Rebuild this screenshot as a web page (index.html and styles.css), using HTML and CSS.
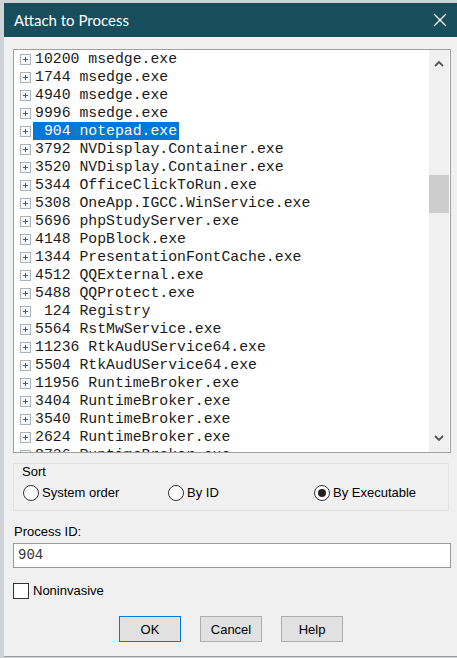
FILE: index.html
```html
<!DOCTYPE html>
<html>
<head>
<meta charset="utf-8">
<link rel="stylesheet" href="styles.css">
</head>
<body>
<div class="dialog">
  <div class="titlebar">
    <span class="title">Attach to Process</span>
    <svg class="close" width="14" height="14" viewBox="0 0 14 14"><path d="M1 1L13 13M13 1L1 13" stroke="#fff" stroke-width="1.2" fill="none"/></svg>
  </div>
  <div class="content">
    <div class="listbox">
      <div class="rows">
        <div class="row"><span class="pl"></span><span class="tx">10200 msedge.exe</span></div>
        <div class="row"><span class="pl"></span><span class="tx">1744 msedge.exe</span></div>
        <div class="row"><span class="pl"></span><span class="tx">4940 msedge.exe</span></div>
        <div class="row"><span class="pl"></span><span class="tx">9996 msedge.exe</span></div>
        <div class="row"><span class="pl"></span><span class="tx sel">&nbsp;904 notepad.exe</span></div>
        <div class="row"><span class="pl"></span><span class="tx">3792 NVDisplay.Container.exe</span></div>
        <div class="row"><span class="pl"></span><span class="tx">3520 NVDisplay.Container.exe</span></div>
        <div class="row"><span class="pl"></span><span class="tx">5344 OfficeClickToRun.exe</span></div>
        <div class="row"><span class="pl"></span><span class="tx">5308 OneApp.IGCC.WinService.exe</span></div>
        <div class="row"><span class="pl"></span><span class="tx">5696 phpStudyServer.exe</span></div>
        <div class="row"><span class="pl"></span><span class="tx">4148 PopBlock.exe</span></div>
        <div class="row"><span class="pl"></span><span class="tx">1344 PresentationFontCache.exe</span></div>
        <div class="row"><span class="pl"></span><span class="tx">4512 QQExternal.exe</span></div>
        <div class="row"><span class="pl"></span><span class="tx">5488 QQProtect.exe</span></div>
        <div class="row"><span class="pl"></span><span class="tx">&nbsp;124 Registry</span></div>
        <div class="row"><span class="pl"></span><span class="tx">5564 RstMwService.exe</span></div>
        <div class="row"><span class="pl"></span><span class="tx">11236 RtkAudUService64.exe</span></div>
        <div class="row"><span class="pl"></span><span class="tx">5504 RtkAudUService64.exe</span></div>
        <div class="row"><span class="pl"></span><span class="tx">11956 RuntimeBroker.exe</span></div>
        <div class="row"><span class="pl"></span><span class="tx">3404 RuntimeBroker.exe</span></div>
        <div class="row"><span class="pl"></span><span class="tx">3540 RuntimeBroker.exe</span></div>
        <div class="row"><span class="pl"></span><span class="tx">2624 RuntimeBroker.exe</span></div>
        <div class="row"><span class="pl"></span><span class="tx">8736 RuntimeBroker.exe</span></div>
      </div>
      <div class="scrollbar">
        <svg class="arrow" width="10" height="6" viewBox="0 0 10 6"><path d="M1 5L5 1L9 5" stroke="#555" stroke-width="1.8" fill="none"/></svg>
        <div class="track"><div class="thumb"></div></div>
        <svg class="arrow" width="10" height="6" viewBox="0 0 10 6"><path d="M1 1L5 5L9 1" stroke="#555" stroke-width="1.8" fill="none"/></svg>
      </div>
    </div>

    <div class="group">
      <div class="legend">Sort</div>
      <div class="radios">
        <label class="radio r1"><span class="circle"></span>System order</label>
        <label class="radio r2"><span class="circle"></span>By ID</label>
        <label class="radio r3"><span class="circle on"></span>By Executable</label>
      </div>
    </div>

    <div class="pid-label">Process ID:</div>
    <div class="input">904</div>

    <label class="check"><span class="box"></span>Noninvasive</label>

    <div class="buttons">
      <div class="btn default">OK</div>
      <div class="btn">Cancel</div>
      <div class="btn">Help</div>
    </div>
  </div>
</div>
</body>
</html>
```

FILE: styles.css
```css
html, body {
  margin: 0;
  padding: 0;
}
body {
  background: #cfd3d6;
  width: 457px;
  height: 658px;
  overflow: hidden;
  font-family: "Liberation Sans", Arial, sans-serif;
}
.dialog {
  margin-left: 4px;
  margin-top: 3px;
  width: 453px;
  height: 653px;
  background: #f0f0f0;
  border-bottom: 1px solid #9a9a9a;
  display: flex;
  flex-direction: column;
}
.titlebar {
  height: 34px;
  background: #184e5c;
  display: flex;
  align-items: center;
  justify-content: space-between;
  padding: 0 10px 0 10px;
  flex-shrink: 0;
}
.title {
  color: #ffffff;
  font-family: Lato, "Open Sans", sans-serif;
  font-size: 15px;
  margin-top: -1px;
}
.content {
  padding: 12px 2px 0 9px;
  display: flex;
  flex-direction: column;
}
.listbox {
  width: 436px;
  height: 402px;
  border: 1px solid #a0a0a0;
  background: #ffffff;
  display: flex;
  overflow: hidden;
}
.rows {
  flex: 1;
  overflow: hidden;
}
.row {
  height: 18px;
  display: flex;
  align-items: center;
  font-family: "Liberation Mono", "Courier New", monospace;
  font-size: 14.8px;
  color: #1a1a1a;
  white-space: pre;
}
.pl {
  width: 11px;
  height: 11px;
  border: 1px solid #a9b2bd;
  box-sizing: border-box;
  margin-left: 6px;
  margin-right: 2px;
  position: relative;
  background: #f7f8fa;
}
.pl::before {
  content: "";
  position: absolute;
  left: 2px;
  top: 4px;
  width: 5px;
  height: 1px;
  background: #4a5a70;
}
.pl::after {
  content: "";
  position: absolute;
  left: 4px;
  top: 2px;
  width: 1px;
  height: 5px;
  background: #4a5a70;
}
.tx {
  padding: 0 2px;
  line-height: 18px;
}
.tx.sel {
  background: #0078d7;
  color: #ffffff;
}
.scrollbar {
  width: 20px;
  background: #f0f0f0;
  display: flex;
  flex-direction: column;
  align-items: center;
  margin-right: 1px;
}
.arrow {
  margin: 11px 0;
  flex-shrink: 0;
}
.track {
  flex: 1;
  width: 100%;
  padding-top: 97px;
  box-sizing: border-box;
}
.thumb {
  height: 38px;
  width: 100%;
  background: #cdcdcd;
}
.group {
  margin-top: 10px;
  width: 436px;
  height: 48px;
  border: 1px solid #e2e2e2;
  box-sizing: border-box;
  padding: 0 0 0 8px;
}
.legend {
  font-size: 13px;
  color: #000;
  height: 16px;
  line-height: 16px;
}
.radios {
  display: flex;
  margin-top: 5px;
  height: 16px;
}
.radio {
  display: flex;
  align-items: center;
  font-size: 13px;
  color: #000;
  height: 16px;
  line-height: 16px;
}
.r1 { width: 145px; }
.r2 { width: 146px; }
.circle {
  width: 16px;
  height: 16px;
  box-sizing: border-box;
  border: 1px solid #333;
  border-radius: 50%;
  background: #fff;
  margin-right: 3px;
  margin-left: 1px;
  position: relative;
}
.circle.on::after {
  content: "";
  position: absolute;
  left: 3px;
  top: 3px;
  width: 8px;
  height: 8px;
  border-radius: 50%;
  background: #222;
}
.pid-label {
  margin-top: 13px;
  margin-left: 1px;
  font-size: 13px;
  height: 16px;
  line-height: 16px;
  color: #000;
}
.input {
  margin-top: 3px;
  width: 438px;
  height: 25px;
  box-sizing: border-box;
  border: 1px solid #9a9a9a;
  background: #fff;
  font-family: "Liberation Mono", "Courier New", monospace;
  font-size: 14px;
  line-height: 23px;
  padding-left: 4px;
  color: #333;
}
.check {
  margin-top: 15px;
  display: flex;
  align-items: center;
  font-size: 13px;
  color: #000;
  height: 16px;
  line-height: 16px;
}
.box {
  width: 16px;
  height: 16px;
  box-sizing: border-box;
  border: 1px solid #333;
  background: #fff;
  margin-right: 4px;
}
.buttons {
  margin-top: 17px;
  display: flex;
  padding-left: 106px;
  gap: 19px;
}
.btn {
  width: 62px;
  height: 26px;
  box-sizing: border-box;
  border: 1px solid #adadad;
  background: #e1e1e1;
  font-size: 13px;
  display: flex;
  align-items: center;
  justify-content: center;
  color: #000;
}
.btn.default {
  border: 1px solid #0078d7;
}
```
